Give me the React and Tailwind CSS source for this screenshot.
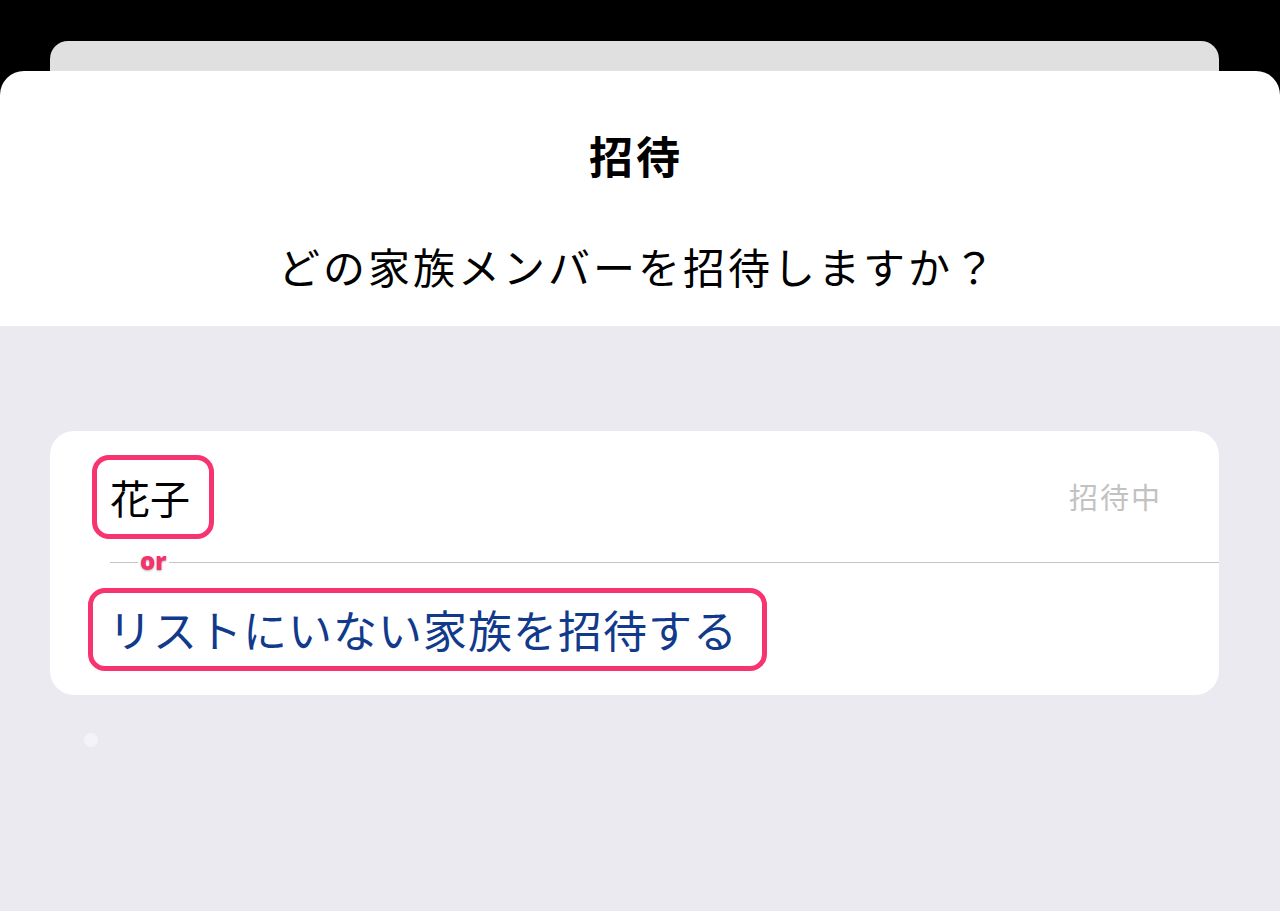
import React from "react";

const jp = { fontFamily: '"Noto Sans CJK JP", "Noto Sans", sans-serif' };

export default function App() {
  return (
    <div className="h-[911px] w-[1280px] overflow-hidden bg-black flex flex-col" style={jp}>
      {/* stacked sheet behind */}
      <div className="pt-[41px]">
        <div className="ml-[50px] mr-[61px] h-[30px] rounded-t-[18px] bg-[#e0e0e0]" />
      </div>

      {/* front sheet header */}
      <div className="h-[255px] rounded-t-[24px] bg-white flex flex-col items-center">
        <h1 className="mt-[57px] mr-[8px] text-[44px] leading-[54px] font-bold tracking-[3px] text-black">招待</h1>
        <p className="mt-[58px] mr-[4px] text-[42px] leading-[52px] tracking-[3px] text-black">どの家族メンバーを招待しますか？</p>
      </div>

      {/* grouped list */}
      <div className="flex-1 bg-[#eaeaf0] pt-[105px] pl-[50px] pr-[61px]">
        <div className="rounded-[24px] bg-white">
          <div className="h-[131px] flex items-center justify-between pl-[42px] pr-[57px]">
            <div className="h-[84px] w-[122px] rounded-[17px] border-[5px] border-[#f7346f] flex items-center pl-[13px]">
              <span className="text-[40px] leading-none text-black">花子</span>
            </div>
            <span className="text-[29px] tracking-[2px] text-[#c2c2c2]">招待中</span>
          </div>

          <div className="relative ml-[60px] h-px bg-[#c4c4c4]">
            <span className="absolute left-[28px] -top-[15px] text-[24px] leading-[28px] font-extrabold text-[#f2336c] bg-white px-[2px] [text-shadow:0_1px_2px_rgba(0,0,0,0.3)]" style={{ fontFamily: '"Open Sans", sans-serif' }}>
              or
            </span>
          </div>

          <div className="h-[132px] flex items-center pl-[38px]">
            <div className="h-[83px] w-[679px] rounded-[17px] border-[5px] border-[#f7346f] flex items-center pl-[15px]">
              <span className="text-[44px] leading-none tracking-[1px] text-[#123a8c]">リストにいない家族を招待する</span>
            </div>
          </div>
        </div>

        <div className="mt-[38px] ml-[34px] h-[14px] w-[14px] rounded-full bg-[#f3f3f8]" />
      </div>
    </div>
  );
}
